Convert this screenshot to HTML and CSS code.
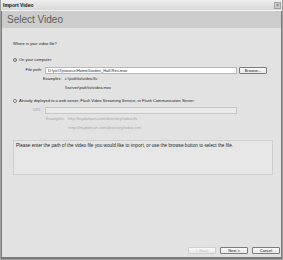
FILE: index.html
```html
<!DOCTYPE html>
<html lang="en">
<head>
  <meta charset="UTF-8">
  <title>Import Video</title>
  <link rel="stylesheet" href="styles.css">
</head>
<body>
  <div class="window">
    <div class="titlebar">
      <span class="title">Import Video</span>
      <span class="close">&#215;</span>
    </div>
    <div class="header">Select Video</div>

    <div class="content">
      <div class="question">Where is your video file?</div>

      <!-- local file -->
      <div class="option">
        <span class="radio checked"></span>
        <span>On your computer:</span>
      </div>
      <div class="field-row">
        <span class="lbl">File path:</span>
        <span class="input">D:\jvc\Tpsource\HomeGarden_Half-Res.mov</span>
        <span class="btn browse">Browse...</span>
      </div>
      <div class="examples">
        <span class="ex-lbl">Examples:</span>
        <div class="ex-vals">
          <div>c:\path\to\video.flv</div>
          <div>\\server\path\to\video.mov</div>
        </div>
      </div>

      <!-- already deployed -->
      <div class="option second">
        <span class="radio"></span>
        <span>Already deployed to a web server, Flash Video Streaming Service, or Flash Communication Server:</span>
      </div>
      <div class="field-row disabled">
        <span class="lbl">URL:</span>
        <span class="input"></span>
      </div>
      <div class="examples disabled url-ex">
        <span class="ex-lbl">Examples:</span>
        <div class="ex-vals">
          <div>http://mydomain.com/directory/video.flv</div>
          <div>rtmp://mydomain.com/directory/video.xml</div>
        </div>
      </div>

      <div class="info">Please enter the path of the video file you would like to import, or use the browse button to select the file.</div>
    </div>

    <div class="footer">
      <span class="btn off">&lt; Back</span>
      <span class="btn">Next &gt;</span>
      <span class="btn">Cancel</span>
    </div>
  </div>
</body>
</html>
```

FILE: styles.css
```css
body {
  margin: 0;
  font-family: 'Liberation Sans', Arial, sans-serif;
  background-color: #ffffff;
}
.window {
  width: 283px;
  height: 260px;
  box-sizing: border-box;
  border: 1px solid #a0a0a0;
  border-top: none;
  display: flex;
  flex-direction: column;
  background-color: #e2e2e2;
  color: #1e1e1e;
  font-size: 4px;
}
.titlebar {
  height: 11px;
  display: flex;
  align-items: center;
  justify-content: space-between;
  padding: 0 1px 0 2px;
  background: linear-gradient(#eeeeee, #d8d8d8);
  border-bottom: 1px solid #f4f4f4;
  box-sizing: border-box;
}
.title {
  font-size: 5px;
  font-weight: bold;
  color: #111;
}
.close {
  width: 7px;
  height: 7px;
  box-sizing: border-box;
  border: 1px solid #a0a0a0;
  background-color: #cbcbcb;
  color: #666;
  font-size: 6px;
  line-height: 5px;
  text-align: center;
}
.header {
  height: 17px;
  background-color: #cccccc;
  color: #5e5e5e;
  font-size: 10px;
  line-height: 17px;
  padding-left: 5px;
  border-left: 1px solid #7a7a7a;
  border-right: 1px solid #7a7a7a;
}
.content {
  flex: 1;
  padding: 12px 8px 0 11px;
  border-left: 1px solid #7a7a7a;
  border-right: 1px solid #7a7a7a;
  line-height: 8px;
}
.option {
  display: flex;
  align-items: center;
  gap: 2px;
  margin-top: 8px;
  height: 8px;
}
.option.second {
  margin-top: 5px;
}
.radio {
  width: 4px;
  height: 4px;
  box-sizing: border-box;
  border: 1px solid #777;
  border-radius: 50%;
  background-color: #fff;
}
.radio.checked {
  background-color: #555;
  box-shadow: inset 0 0 0 1px #fff;
}
.field-row {
  display: flex;
  align-items: center;
  height: 8px;
  margin-top: 2px;
}
.field-row.disabled {
  margin-top: 1px;
}
.lbl {
  width: 29px;
  text-align: right;
  padding-right: 3px;
}
.input {
  width: 192px;
  height: 7px;
  box-sizing: border-box;
  border: 1px solid #b8b8b8;
  background-color: #fff;
  line-height: 5px;
  padding-left: 2px;
  white-space: nowrap;
  overflow: hidden;
}
.btn {
  width: 28px;
  height: 7px;
  box-sizing: border-box;
  border: 1px solid #7c7c7c;
  border-radius: 1px;
  background: linear-gradient(#fafafa, #e6e6e6);
  text-align: center;
  line-height: 5px;
  color: #1e1e1e;
}
.browse {
  margin-left: 2px;
}
.examples {
  display: flex;
  margin-left: 30px;
  line-height: 9px;
}
.url-ex {
  margin-left: 33px;
}
.ex-lbl {
  width: 18px;
  text-align: right;
  padding-right: 4px;
}
.disabled {
  color: #a6a6a6;
}
.disabled .input {
  background-color: #e9e9e9;
  border-color: #c6c6c6;
}
.info {
  margin-top: 8px;
  height: 35px;
  box-sizing: border-box;
  border: 1px solid #cecece;
  background-color: #e6e6e6;
  padding: 1px 2px;
  font-size: 4.7px;
  line-height: 8px;
  white-space: nowrap;
}
.footer {
  display: flex;
  justify-content: flex-end;
  gap: 4px;
  padding: 0 1px 3px 0;
  border-left: 1px solid #7a7a7a;
  border-right: 1px solid #7a7a7a;
  border-bottom: 2px solid #7a7a7a;
}
.btn.off {
  color: #bbb;
  border-color: #cfcfcf;
}
```
